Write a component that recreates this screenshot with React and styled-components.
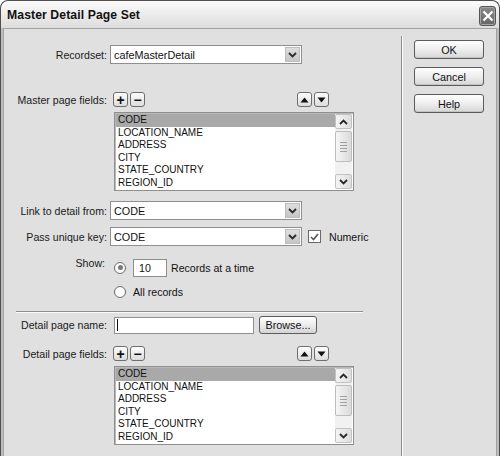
import styled, { createGlobalStyle } from "styled-components";

const GlobalStyle = createGlobalStyle`
  html, body { margin: 0; padding: 0; background: #fff; }
  body { font-family: "Liberation Sans", Arial, sans-serif; color: #111; }
  * { box-sizing: border-box; }
`;

const FIELDS = ["CODE", "LOCATION_NAME", "ADDRESS", "CITY", "STATE_COUNTRY", "REGION_ID"];

function Chevron({ up }) {
  return (
    <svg width="9" height="6" viewBox="0 0 9 6" style={up ? { transform: "rotate(180deg)" } : undefined}>
      <path d="M1 1 L4.5 4.5 L8 1" stroke="#2a2a2a" strokeWidth="1.8" fill="none" />
    </svg>
  );
}

function Triangle({ up }) {
  return (
    <svg width="9" height="6" viewBox="0 0 9 6">
      <path d={up ? "M0.5 5.5 L4.5 0.5 L8.5 5.5 Z" : "M0.5 0.5 L4.5 5.5 L8.5 0.5 Z"} fill="#111" />
    </svg>
  );
}

function Select({ value }) {
  return (
    <SelectBox>
      <span>{value}</span>
      <DropBtn><Chevron /></DropBtn>
    </SelectBox>
  );
}

function FieldList() {
  return (
    <ListBox>
      <Items>
        {FIELDS.map((f, i) => (
          <Item key={f} $selected={i === 0}>{f}</Item>
        ))}
      </Items>
      <ScrollBar>
        <ScrollBtn><Chevron up /></ScrollBtn>
        <Track>
          <Thumb>
            <Grip />
            <Grip />
            <Grip />
            <Grip />
          </Thumb>
        </Track>
        <ScrollBtn><Chevron /></ScrollBtn>
      </ScrollBar>
    </ListBox>
  );
}

function FieldTools() {
  return (
    <Tools>
      <ToolGroup>
        <MiniBtn>+</MiniBtn>
        <MiniBtn>−</MiniBtn>
      </ToolGroup>
      <ToolGroup>
        <MiniBtn><Triangle up /></MiniBtn>
        <MiniBtn><Triangle /></MiniBtn>
      </ToolGroup>
    </Tools>
  );
}

export default function App() {
  return (
    <>
      <GlobalStyle />
      <Window>
        <TitleBar>
          <Title>Master Detail Page Set</Title>
          <CloseBtn>
            <svg width="12" height="12" viewBox="0 0 12 12">
              <path d="M1.5 1.5 L10.5 10.5 M10.5 1.5 L1.5 10.5" stroke="#fff" strokeWidth="2.2" />
            </svg>
          </CloseBtn>
        </TitleBar>
        <Body>
          <FormPane>
            <Row $mt={9} $h={19}>
              <Label>Recordset:</Label>
              <Select value="cafeMasterDetail" />
            </Row>
            <Row $mt={28} $h={15}>
              <Label>Master page fields:</Label>
              <FieldTools />
            </Row>
            <Indent $mt={5}>
              <FieldList />
            </Indent>
            <Row $mt={10} $h={19}>
              <Label>Link to detail from:</Label>
              <Select value="CODE" />
            </Row>
            <Row $mt={7} $h={19}>
              <Label>Pass unique key:</Label>
              <Select value="CODE" />
              <CheckBox>
                <svg width="9" height="8" viewBox="0 0 9 8">
                  <path d="M1 4 L3.5 6.5 L8 1" stroke="#555" strokeWidth="1.6" fill="none" />
                </svg>
              </CheckBox>
              <Text $ml={8}>Numeric</Text>
            </Row>
            <Row $mt={12} $h={19}>
              <Label $top>Show:</Label>
              <Radio $ml={7} $checked />
              <SmallInput>10</SmallInput>
              <Text $ml={4}>Records at a time</Text>
            </Row>
            <Row $mt={8} $h={14}>
              <Radio $ml={110} />
              <Text $ml={7}>All records</Text>
            </Row>
            <Separator />
            <Row $mt={3} $h={18}>
              <Label>Detail page name:</Label>
              <TextInput><Caret /></TextInput>
              <BrowseBtn>Browse...</BrowseBtn>
            </Row>
            <Row $mt={12} $h={15}>
              <Label>Detail page fields:</Label>
              <FieldTools />
            </Row>
            <Indent $mt={5}>
              <FieldList />
            </Indent>
          </FormPane>
          <ButtonColumn>
            <DlgButton>OK</DlgButton>
            <DlgButton>Cancel</DlgButton>
            <DlgButton>Help</DlgButton>
          </ButtonColumn>
        </Body>
      </Window>
    </>
  );
}

const Window = styled.div`
  width: 500px;
  height: 456px;
  overflow: hidden;
  display: flex;
  flex-direction: column;
  background: #bdbdbd;
  border: 1px solid #4e4e4e;
  border-bottom: none;
  border-radius: 8px 8px 0 0;
`;

const TitleBar = styled.div`
  height: 27px;
  flex-shrink: 0;
  display: flex;
  align-items: center;
  justify-content: space-between;
  padding: 0 3px 0 6px;
  background: linear-gradient(#fbfbfb, #ededed 45%, #dcdcdc);
  border-radius: 7px 7px 0 0;
`;

const Title = styled.div`
  font-size: 12.2px;
  font-weight: bold;
  color: #111;
  letter-spacing: 0.1px;
`;

const CloseBtn = styled.div`
  width: 17px;
  height: 20px;
  margin-top: 2px;
  display: flex;
  align-items: center;
  justify-content: center;
  background: linear-gradient(#8a8a8a, #666);
  border: 1px solid #555;
  border-radius: 3px;
  box-shadow: inset 0 0 0 1px #a5a5a5;
`;

const Body = styled.div`
  flex: 1;
  display: flex;
  margin: 0 2px;
  background: #e0e0e0;
  border: 1px solid #a3a3a3;
  border-bottom: none;
`;

const FormPane = styled.div`
  width: 398px;
  flex-shrink: 0;
  margin-top: 7px;
  border-right: 1px solid #8e8e8e;
  box-shadow: 1px 0 0 #fbfbfb;
  display: flex;
  flex-direction: column;
`;

const Row = styled.div`
  display: flex;
  align-items: center;
  height: ${(p) => p.$h}px;
  margin-top: ${(p) => p.$mt}px;
  flex-shrink: 0;
`;

const Indent = styled.div`
  margin-top: ${(p) => p.$mt}px;
  margin-left: 110px;
  flex-shrink: 0;
`;

const Label = styled.div`
  width: 103px;
  flex-shrink: 0;
  text-align: right;
  font-size: 10.6px;
  color: #1a1a1a;
  align-self: ${(p) => (p.$top ? "flex-start" : "center")};
  margin-top: ${(p) => (p.$top ? "-1px" : "0")};
  padding-right: ${(p) => (p.$top ? "2px" : "0")};
`;

const Text = styled.span`
  font-size: 10.6px;
  margin-left: ${(p) => p.$ml}px;
  white-space: nowrap;
`;

const SelectBox = styled.div`
  margin-left: 3px;
  width: 192px;
  height: 19px;
  display: flex;
  align-items: center;
  justify-content: space-between;
  padding: 0 1px 0 3px;
  background: #fff;
  border: 1px solid #8f8f8f;
  font-size: 10.8px;
`;

const DropBtn = styled.div`
  width: 15px;
  height: 15px;
  display: flex;
  align-items: center;
  justify-content: center;
  background: linear-gradient(#dedede, #c6c6c6);
  border: 1px solid #bdbdbd;
`;

const Tools = styled.div`
  margin-left: 6px;
  width: 216px;
  display: flex;
  justify-content: space-between;
`;

const ToolGroup = styled.div`
  display: flex;
  gap: 2px;
`;

const MiniBtn = styled.div`
  width: 15px;
  height: 15px;
  display: flex;
  align-items: center;
  justify-content: center;
  border: 1px solid #6e6e6e;
  border-radius: 3px;
  background: linear-gradient(#fdfdfd, #dcdcdc);
  font-size: 14px;
  font-weight: bold;
  line-height: 1;
  color: #111;
`;

const ListBox = styled.div`
  width: 240px;
  height: 79px;
  display: flex;
  background: #fff;
  border: 1px solid #8f8f8f;
  box-shadow: inset 1px 1px 0 #b8b8b8;
  padding: 1px;
`;

const Items = styled.div`
  flex: 1;
  display: flex;
  flex-direction: column;
`;

const Item = styled.div`
  height: 12.6px;
  line-height: 12.6px;
  padding-left: 2px;
  font-size: 10px;
  color: #111;
  background: ${(p) => (p.$selected ? "#a9a9a9" : "transparent")};
`;

const ScrollBar = styled.div`
  width: 17px;
  display: flex;
  flex-direction: column;
  background: #f1f1f1;
`;

const ScrollBtn = styled.div`
  height: 15px;
  display: flex;
  align-items: center;
  justify-content: center;
  background: linear-gradient(90deg, #f4f4f4, #dedede);
  border: 1px solid #c2c2c2;
  border-radius: 2px;
`;

const Track = styled.div`
  flex: 1;
  padding: 2px 0;
`;

const Thumb = styled.div`
  height: 31px;
  display: flex;
  flex-direction: column;
  align-items: center;
  justify-content: center;
  gap: 2px;
  background: linear-gradient(90deg, #f6f6f6, #dadada);
  border: 1px solid #bdbdbd;
  border-radius: 2px;
`;

const Grip = styled.div`
  width: 7px;
  height: 1px;
  background: #a0a0a0;
`;

const CheckBox = styled.div`
  margin-left: 6px;
  width: 13px;
  height: 13px;
  display: flex;
  align-items: center;
  justify-content: center;
  background: #fff;
  border: 1px solid #6a6a6a;
`;

const Radio = styled.div`
  margin-left: ${(p) => p.$ml}px;
  width: 12px;
  height: 12px;
  border-radius: 50%;
  border: 1px solid #6a6a6a;
  background: #fbfbfb;
  display: flex;
  align-items: center;
  justify-content: center;
  flex-shrink: 0;
  &::after {
    content: "";
    width: 5px;
    height: 5px;
    border-radius: 50%;
    background: ${(p) => (p.$checked ? "#7a7a7a" : "transparent")};
  }
`;

const SmallInput = styled.div`
  margin-left: 7px;
  width: 34px;
  height: 18px;
  display: flex;
  align-items: center;
  padding-left: 5px;
  background: #fff;
  border: 1px solid #8f8f8f;
  font-size: 10.6px;
`;

const Separator = styled.div`
  margin: 12px 0 0 12px;
  width: 347px;
  height: 2px;
  flex-shrink: 0;
  border-top: 1px solid #8e8e8e;
  border-bottom: 1px solid #fbfbfb;
`;

const TextInput = styled.div`
  margin-left: 7px;
  width: 140px;
  height: 17px;
  display: flex;
  align-items: center;
  padding-left: 2px;
  background: #fff;
  border: 1px solid #8f8f8f;
`;

const Caret = styled.div`
  width: 1px;
  height: 12px;
  background: #111;
`;

const BrowseBtn = styled.div`
  margin-left: 5px;
  width: 58px;
  height: 18px;
  display: flex;
  align-items: center;
  justify-content: center;
  border: 1px solid #5c5c5c;
  border-radius: 3px;
  background: linear-gradient(#fefefe, #ececec 50%, #d4d4d4);
  font-size: 10.8px;
`;

const ButtonColumn = styled.div`
  display: flex;
  flex-direction: column;
  gap: 8px;
  padding: 11px 0 0 12px;
`;

const DlgButton = styled.div`
  width: 70px;
  height: 19px;
  display: flex;
  align-items: center;
  justify-content: center;
  border: 1px solid #5c5c5c;
  border-radius: 3px;
  background: linear-gradient(#fefefe, #eeeeee 50%, #d6d6d6);
  box-shadow: inset 0 -1px 0 #c4c4c4;
  font-size: 10.8px;
  color: #111;
`;
